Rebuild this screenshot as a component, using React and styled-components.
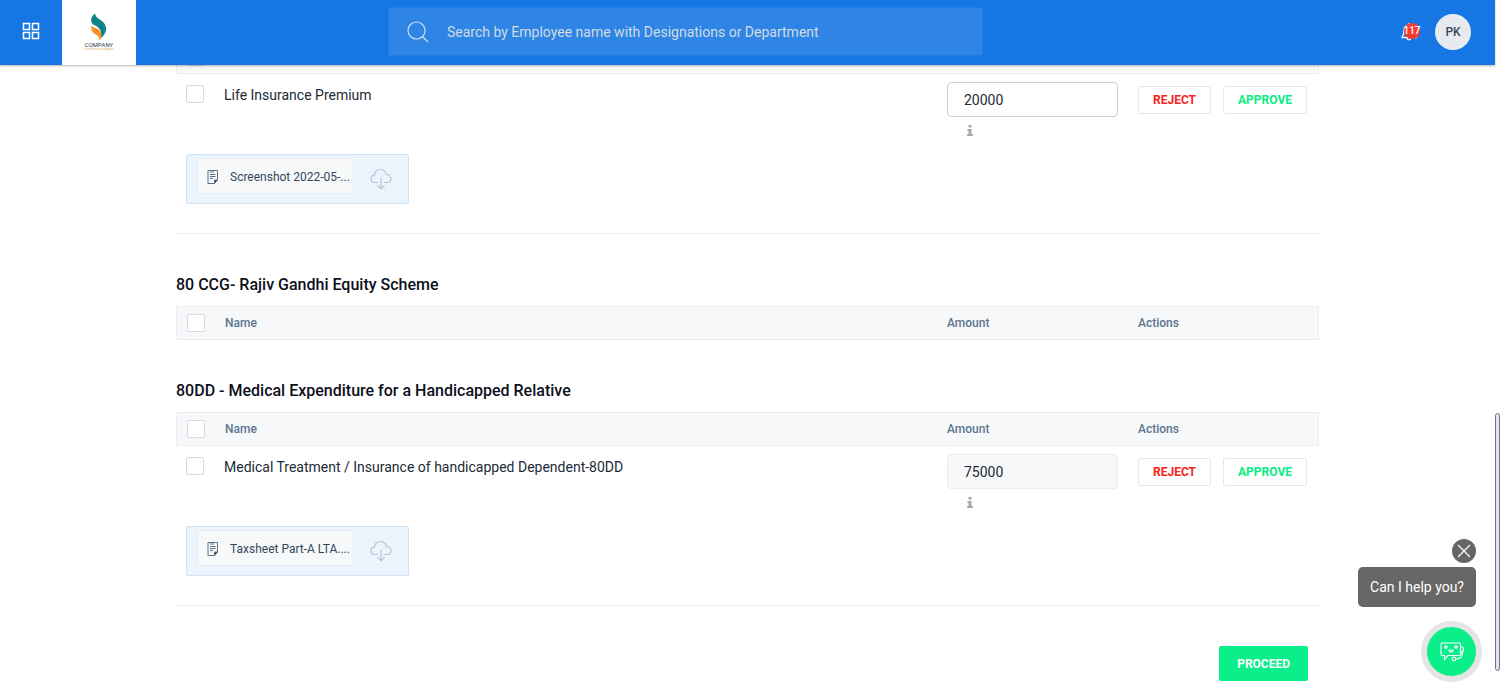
import React from 'react'
import styled, { createGlobalStyle } from 'styled-components'

const sections = [
  {
    id: '80c',
    title: '80C - Deductions',
    items: [
      {
        id: 'life',
        name: 'Life Insurance Premium',
        amount: '20000',
        file: 'Screenshot 2022-05-...'
      }
    ]
  },
  { id: '80ccg', title: '80 CCG- Rajiv Gandhi Equity Scheme', items: [] },
  {
    id: '80dd',
    title: '80DD - Medical Expenditure for a Handicapped Relative',
    items: [
      {
        id: 'medical',
        name: 'Medical Treatment / Insurance of handicapped Dependent-80DD',
        amount: '75000',
        readOnly: true,
        file: 'Taxsheet Part-A LTA....'
      }
    ]
  }
]

const GridIcon = () => (
  <svg width="18" height="18" viewBox="0 0 18 18" fill="none" stroke="#fff" strokeWidth="1.5">
    <rect x="1.5" y="1.5" width="6" height="6" />
    <rect x="10.5" y="1.5" width="6" height="6" />
    <rect x="1.5" y="10.5" width="6" height="6" />
    <rect x="10.5" y="10.5" width="6" height="6" />
  </svg>
)

const CompanyLogo = () => (
  <svg width="36" height="40" viewBox="0 0 36 40">
    <path d="M14 0.500 C9 4 9 10 13 12 C18 14 21 17 20 25 C25 21 27 15 23 10 C20 6 15 6 14 0.500Z" fill="#11868c" />
    <path d="M13 4 C14 9 22 10 22 20" fill="none" stroke="#0a6a73" strokeWidth="0.8" />
    <path d="M10.500 12.500 C10 17 11 19 14 21 C17 23 19 24 18 28 C21 25 21 20 18 17 C16 15 12 15 10.500 12.500Z" fill="#f58a1f" />
    <path d="M11.500 15 C13 19 18 19 18.500 26" fill="none" stroke="#fbb040" strokeWidth="0.8" />
    <text x="18" y="34" textAnchor="middle" fontFamily="Roboto, sans-serif" fontSize="6" fill="#2d4054">
      COMPANY
    </text>
    <text x="18" y="37" textAnchor="middle" fontFamily="Roboto, sans-serif" fontSize="4" fill="#d9b96a">
      business slogan
    </text>
  </svg>
)

const SearchIcon = () => (
  <svg width="22" height="22" viewBox="0 0 22 22" fill="none" stroke="#d6e0ea" strokeWidth="1.2">
    <circle cx="9.5" cy="9.5" r="8.5" />
    <path d="M15.5 15.5 L21 21" />
  </svg>
)

const BellIcon = () => (
  <svg width="18" height="20" viewBox="0 0 18 20" fill="none" stroke="#fff" strokeWidth="1.3">
    <path d="M8 3 C4 3.5 3 6 3 9 C3 12 2.5 13 1 15.5 H15 C13.5 13 13 12 13 9 C13 6 12 3.5 8 3Z" />
    <path d="M8 1 V3 M6 16 C6.2 18.5 9.8 18.5 10 16" />
  </svg>
)

const FileIcon = () => (
  <svg width="12" height="16" viewBox="0 0 12 16" fill="none" stroke="#5b7083" strokeWidth="1">
    <path d="M1 1.5 H10.500 V11 L7.500 14.500 H1Z" />
    <path d="M10.500 11 H7.500 V14.500" fill="#344a5e" />
    <path d="M4 1 V4 M6 1 V4 M3 5.500 H8.500 M3 7.500 H8.500 M3 9.500 H6" />
  </svg>
)

const CloudIcon = () => (
  <svg width="22" height="22" viewBox="0 0 22 22" fill="none" stroke="#b9c2d3" strokeWidth="1.2">
    <path d="M8 14.5 H5 C2.5 14.5 1 12.8 1 10.8 C1 8.8 2.5 7.3 4.5 7.2 C4.8 4 7 1.5 10.5 1.5 C13.6 1.5 15.8 3.5 16.3 6.5 C19 6.5 21 8.3 21 10.7 C21 13 19.2 14.5 17 14.5 H14" />
    <path d="M11 10 V20.5 M7.5 17.5 L11 20.7 L14.5 17.5" />
  </svg>
)

const InfoIcon = () => (
  <svg width="6" height="11" viewBox="0 0 6 11" fill="#a9a9a9">
    <path d="M1.5 0 H4.5 V2.5 H1.5Z M0.5 4 H4.5 V9 H5.8 V11 H0.2 V9 H1.5 V6 H0.5Z" />
  </svg>
)

const CloseIcon = () => (
  <svg width="14" height="14" viewBox="0 0 14 14" stroke="#fff" strokeWidth="1.2">
    <path d="M1 1 L13 13 M13 1 L1 13" />
  </svg>
)

const BotIcon = () => (
  <svg width="24" height="20" viewBox="0 0 24 20" fill="none" stroke="#fff" strokeWidth="1.2">
    <path d="M2.5 1 H19 C20 1 20.5 1.5 20.5 2.5 V12 C20.5 13 20 13.5 19 13.5 H8 L4.5 17.5 V13.5 H2.5 C1.5 13.5 1 13 1 12 V2.5 C1 1.5 1.5 1 2.5 1Z" />
    <circle cx="6" cy="5" r="1.2" />
    <circle cx="16" cy="5" r="1.2" />
    <path d="M9 8 H13 C13 10.5 9 10.5 9 8Z" />
    <path d="M20.5 4.5 C23 4.5 23.5 6 23.5 7.5 C23.5 9 23 10.5 20.5 10.5 M22.5 10 C22.5 14 21 17 16 17" />
    <circle cx="14" cy="17" r="1.8" />
  </svg>
)

const TaxSection = ({ title, items }) => (
  <section>
    <Title>{title}</Title>
    <Table>
      <thead>
        <HeadRow>
          <CheckHead>
            <Checkbox type="checkbox" aria-label={`Select all in ${title}`} />
          </CheckHead>
          <Head>Name</Head>
          <AmountHead>Amount</AmountHead>
          <ActionsHead>Actions</ActionsHead>
        </HeadRow>
      </thead>
      {items.map(item => (
        <Declaration key={item.id} item={item} />
      ))}
    </Table>
  </section>
)

const Declaration = ({ item }) => {
  const { id, name, amount, readOnly, file } = item

  return (
    <tbody>
      <tr>
        <CheckCell>
          <Checkbox type="checkbox" id={id} />
        </CheckCell>
        <Cell>
          <Name htmlFor={id}>{name}</Name>
        </Cell>
        <ValueCell>
          <Amount
            type="text"
            aria-label={`${name} amount`}
            defaultValue={amount}
            readOnly={readOnly}
          />
          <Info type="button" aria-label="Details">
            <InfoIcon />
          </Info>
        </ValueCell>
        <ValueCell>
          <Actions>
            <Action type="button" color="#f8231b">
              REJECT
            </Action>
            <Action type="button" color="#06ee82">
              APPROVE
            </Action>
          </Actions>
        </ValueCell>
      </tr>
      <tr>
        <FileCell colSpan="4">
          <FileBox>
            <FileLink href="#file">
              <FileIcon />
              {file}
            </FileLink>
            <Download type="button" aria-label="Download">
              <CloudIcon />
            </Download>
          </FileBox>
        </FileCell>
      </tr>
    </tbody>
  )
}

const App = () => (
  <Page>
    <GlobalStyle />
    <Header>
      <MenuButton type="button" aria-label="Menu">
        <GridIcon />
      </MenuButton>
      <LogoLink href="#home" aria-label="Home">
        <CompanyLogo />
      </LogoLink>
      <Search>
        <SearchIcon />
        <SearchInput
          type="text"
          aria-label="Search"
          placeholder="Search by Employee name with Designations or Department"
        />
      </Search>
      <Account>
        <Notifications type="button">
          <BellIcon />
          <Badge>117</Badge>
        </Notifications>
        <Avatar type="button">PK</Avatar>
      </Account>
    </Header>
    <Main>
      {sections.map(section => (
        <TaxSection key={section.id} {...section} />
      ))}
      <Footer>
        <Proceed type="button">PROCEED</Proceed>
      </Footer>
    </Main>
    <Chat>
      <Close type="button" aria-label="Close">
        <CloseIcon />
      </Close>
      <Bubble>Can I help you?</Bubble>
      <BotButton type="button" aria-label="Open chat">
        <BotIcon />
      </BotButton>
    </Chat>
    <ScrollThumb />
  </Page>
)

const GlobalStyle = createGlobalStyle`
  * {
    box-sizing: border-box;
  }

  body {
    margin: 0;
    background: #fff;
  }

  body,
  button,
  input {
    font-family: Roboto, sans-serif;
  }

  svg {
    display: block;
    flex: none;
  }
`

const Page = styled.div`
  padding-right: 5px;
`

const Header = styled.header`
  position: sticky;
  top: 0;
  z-index: 1;
  display: flex;
  align-items: center;
  height: 65px;
  background: #1676e3;
  box-shadow: 0 1px 2px rgba(0, 0, 0, 0.3);
`

const MenuButton = styled.button`
  display: flex;
  align-items: center;
  justify-content: center;
  width: 62px;
  height: 100%;
  padding: 0 0 4px;
  border: 0;
  background: none;
  cursor: pointer;
`

const LogoLink = styled.a`
  display: flex;
  align-items: center;
  justify-content: center;
  width: 74px;
  height: 100%;
  background: #fff;
`

const Search = styled.div`
  display: flex;
  align-items: center;
  gap: 18px;
  width: 40%;
  max-width: 595px;
  height: 49px;
  margin-left: 252px;
  margin-bottom: 2px;
  padding: 0 18px;
  background: #2e85e6;
  border: 1px solid #217de6;
  border-radius: 2px;
`

const SearchInput = styled.input`
  flex: 1;
  min-width: 0;
  padding: 0;
  border: 0;
  outline: 0;
  background: none;
  color: #fff;
  font-size: 14px;

  &::placeholder {
    color: #d0dbe3;
    opacity: 1;
  }
`

const Account = styled.div`
  display: flex;
  align-items: center;
  gap: 14px;
  margin-left: auto;
  margin-bottom: 2px;
  padding-right: 24px;
`

const Notifications = styled.button`
  position: relative;
  width: 20px;
  height: 20px;
  padding: 0;
  border: 0;
  background: none;
  cursor: pointer;
`

const Badge = styled.span`
  position: absolute;
  top: 1px;
  right: 1px;
  display: flex;
  justify-content: center;
  width: 16px;
  height: 16px;
  border-radius: 50%;
  background: #f93a2f;
  color: #fff;
  font-size: 10px;
  font-weight: 500;
  line-height: 16px;
`

const Avatar = styled.button`
  width: 36px;
  height: 36px;
  padding: 0;
  border: 0;
  border-radius: 50%;
  background: #e7ebf0;
  color: #34475a;
  font-size: 12px;
  font-weight: 500;
`

/* the page is scrolled, so the first section starts under the header */
const Main = styled.main`
  max-width: 1143px;
  margin: -97px auto 0;
`

const Title = styled.h2`
  margin: 0;
  padding: 39px 0 9px;
  color: #0c0f1c;
  font-size: 16px;
  font-weight: 500;
  line-height: 24px;
`

const Table = styled.table`
  width: 100%;
  table-layout: fixed;
  border-spacing: 0;
`

const HeadRow = styled.tr`
  height: 34px;
  background: #f7f8fa;
`

const Head = styled.th`
  padding: 0 0 0 1px;
  border: solid #e9edf2;
  border-width: 1px 0;
  color: #5b7690;
  font-size: 12px;
  font-weight: 500;
  text-align: left;
`

const CheckHead = styled(Head)`
  width: 48px;
  padding-left: 10px;
  border-left-width: 1px;
`

const AmountHead = styled(Head)`
  width: 191px;
`

const ActionsHead = styled(Head)`
  width: 182px;
  border-right-width: 1px;
`

const Checkbox = styled.input`
  display: block;
  appearance: none;
  width: 18px;
  height: 18px;
  margin: 0;
  border: 1px solid #d5dce6;
  border-radius: 2px;
  background: #fff;
`

const Cell = styled.td`
  height: 72px;
  padding: 8px 0 0;
  vertical-align: top;
`

const CheckCell = styled(Cell)`
  padding: 11px 0 0 10px;
`

const ValueCell = styled(Cell)`
  padding-left: 1px;
`

const Name = styled.label`
  display: block;
  color: #212b36;
  font-size: 14px;
  line-height: 26px;
`

const Amount = styled.input`
  display: block;
  width: 171px;
  height: 35px;
  padding: 0 16px;
  border: 1px solid ${props => (props.readOnly ? '#e9edf2' : '#c9cfe0')};
  border-radius: 4px;
  background: ${props => (props.readOnly ? '#f7f8fa' : '#fff')};
  color: #212b36;
  font-size: 14px;
`

const Info = styled.button`
  display: block;
  margin: 8px 0 0 20px;
  padding: 0;
  border: 0;
  background: none;
`

const Actions = styled.div`
  display: flex;
  gap: 12px;
  padding-top: 4px;
`

const Action = styled.button`
  height: 28px;
  padding: 0 14px;
  border: 1px solid #e4e8ee;
  border-radius: 2px;
  background: #fff;
  color: ${props => props.color};
  font-size: 12px;
  font-weight: 700;
  cursor: pointer;
`

const FileCell = styled.td`
  padding: 8px 10px 29px;
  border-bottom: 1px solid #e9edf2;
`

const FileBox = styled.div`
  display: flex;
  align-items: flex-start;
  width: 223px;
  height: 50px;
  padding: 3px 10px;
  border: 1px solid #cfe3f7;
  border-radius: 2px;
  background: #ebf3fd;
`

const FileLink = styled.a`
  display: flex;
  align-items: center;
  gap: 11px;
  width: 157px;
  height: 36px;
  padding: 2px 0 0 9px;
  border: 1px solid #e9edf2;
  border-radius: 2px;
  background: #f7f8fa;
  color: #34475a;
  font-size: 12px;
  text-decoration: none;
  white-space: nowrap;
`

const Download = styled.button`
  margin: 10px 0 0 16px;
  padding: 0;
  border: 0;
  background: none;
  cursor: pointer;
`

const Footer = styled.div`
  display: flex;
  justify-content: flex-end;
  padding: 40px 11px 12px;
`

const Proceed = styled.button`
  height: 35px;
  padding: 0 18px;
  border: 0;
  border-radius: 2px;
  background: #0aef8a;
  color: #fff;
  font-size: 12px;
  font-weight: 700;
  cursor: pointer;
`

const Chat = styled.aside`
  position: fixed;
  right: 18px;
  bottom: 11px;
  z-index: 1;
  display: flex;
  flex-direction: column;
  align-items: flex-end;
`

const Close = styled.button`
  display: flex;
  align-items: center;
  justify-content: center;
  width: 24px;
  height: 24px;
  margin: 0 6px 4px 0;
  padding: 0;
  border: 0;
  border-radius: 50%;
  background: #666;
`

const Bubble = styled.div`
  margin: 0 6px 14px 0;
  padding: 0 12px;
  border-radius: 5px;
  background: #666;
  color: #fff;
  font-size: 14px;
  line-height: 40px;
`

const BotButton = styled.button`
  display: flex;
  align-items: center;
  justify-content: center;
  width: 61px;
  height: 61px;
  padding: 0;
  border: 6px solid #e5e5e5;
  border-radius: 50%;
  background: #0aef8a;
  cursor: pointer;
`

const ScrollThumb = styled.div`
  position: fixed;
  top: 413px;
  right: 0;
  z-index: 1;
  width: 5px;
  height: 258px;
  border: 1px solid #6f7580;
  border-radius: 3px;
  background: #dfe4ef;
`

export default App
